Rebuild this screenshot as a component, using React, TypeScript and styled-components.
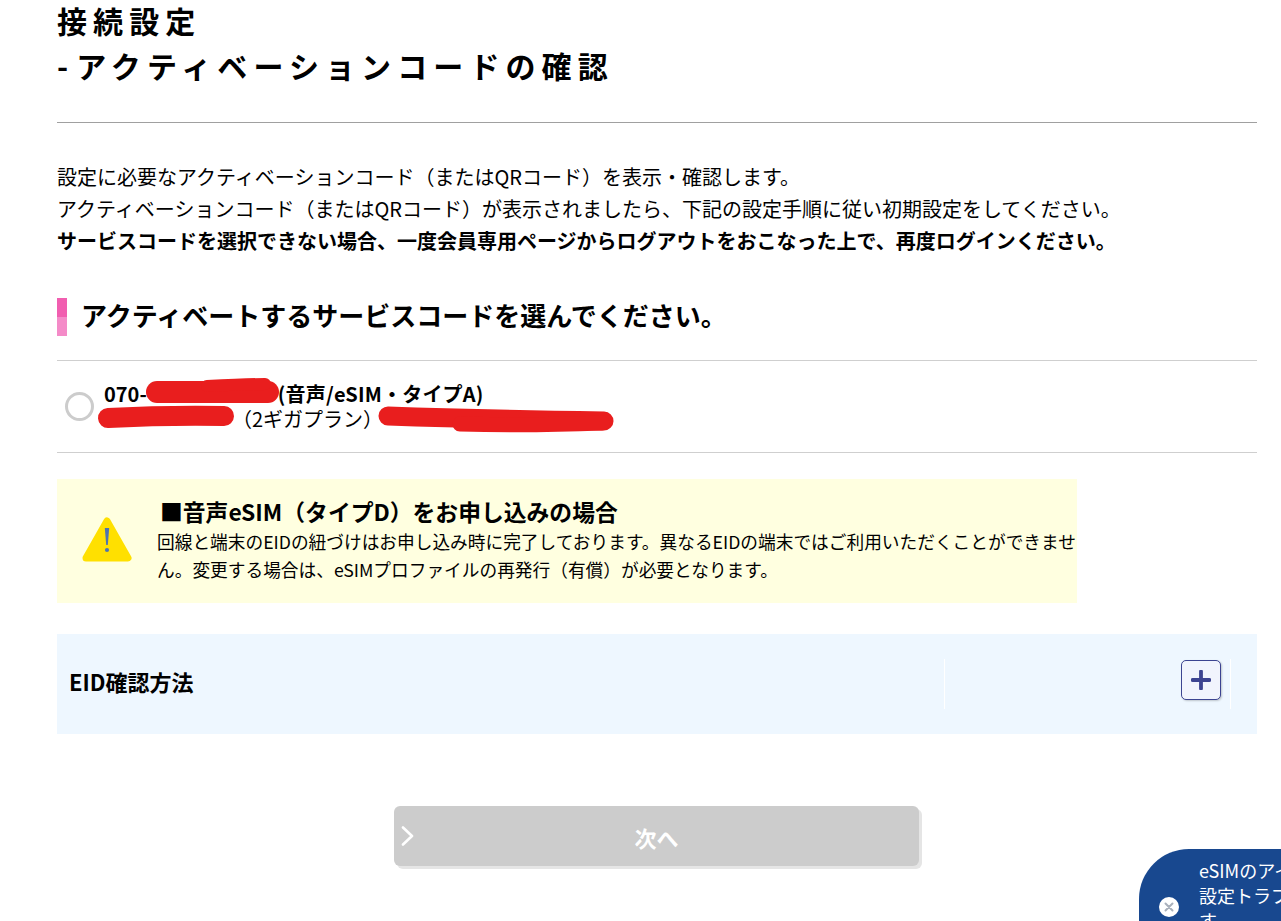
import { createGlobalStyle, styled } from "styled-components";

const GlobalStyle = createGlobalStyle`
  html, body {
    margin: 0;
    padding: 0;
    background: #fff;
    overflow: hidden;
  }
  body {
    width: 1281px;
    height: 921px;
    font-family: "Noto Sans CJK JP", "Noto Sans", sans-serif;
    color: #000;
  }
`;

const Page = styled.div`
  position: relative;
  width: 1281px;
  height: 921px;
  overflow: hidden;
`;

const Content = styled.main`
  width: 1200px;
  margin-left: 57px;
`;

const PageTitle = styled.h1`
  box-sizing: border-box;
  height: 123px;
  margin: 0;
  border-bottom: 1px solid #a0a0a0;
  font-size: 30px;
  font-weight: 700;
  letter-spacing: 6.1px;
`;

const TitleLine = styled.span`
  display: block;
  height: 45px;
  line-height: 41px;
`;

const Hyphen = styled.span`
  margin-right: 2px;
`;

const Intro = styled.div`
  margin-top: 38px;
  font-size: 20px;
  line-height: 32px;
`;

const IntroLine = styled.p<{ $strong?: boolean }>`
  margin: 0;
  font-weight: ${(p) => (p.$strong ? 700 : 400)};
`;

const SectionTitle = styled.h2`
  display: flex;
  align-items: center;
  box-sizing: border-box;
  height: 38px;
  margin: 41px 0 0;
  padding: 0 0 5px 24px;
  font-size: 26px;
  line-height: 33px;
  font-weight: 700;
  background: linear-gradient(#f15eb0 50%, #f48bc8 50%) left top / 10px 100% no-repeat;
`;

const ServiceRow = styled.label`
  position: relative;
  display: flex;
  align-items: center;
  height: 91px;
  margin-top: 24px;
  border-top: 1px solid #cfcfcf;
  border-bottom: 1px solid #cfcfcf;
`;

const Radio = styled.span`
  box-sizing: border-box;
  flex: none;
  width: 29px;
  height: 29px;
  margin-left: 8px;
  border: 3px solid #cccccc;
  border-radius: 50%;
  background: #fff;
`;

const ServiceText = styled.div`
  margin: -2px 0 0 10px;
  font-size: 20px;
  line-height: 25px;
`;

const ServiceNumber = styled.div`
  font-weight: 700;
  white-space: nowrap;
`;

const ServiceType = styled.span`
  letter-spacing: 0.2px;
`;

const RedactedGap = styled.span<{ $width: number }>`
  display: inline-block;
  width: ${(p) => p.$width}px;
`;

const ServicePlan = styled.div`
  white-space: nowrap;
`;

const Scribble = styled.svg`
  position: absolute;
  left: 0;
  top: 0;
  pointer-events: none;
  overflow: visible;
`;

const Notice = styled.section`
  display: flex;
  box-sizing: border-box;
  width: 1020px;
  height: 124px;
  margin-top: 26px;
  padding-top: 18px;
  background: #ffffe0;
`;

const NoticeIcon = styled.svg`
  flex: none;
  width: 50px;
  height: 46px;
  margin: 20px 0 0 25px;
`;

const NoticeBody = styled.div`
  width: 920px;
  margin-left: 25px;
`;

const NoticeTitle = styled.h3`
  margin: 0 0 0 3px;
  font-size: 22.8px;
  line-height: 30px;
  font-weight: 700;
`;

const NoticeText = styled.p`
  margin: 0;
  font-size: 17.7px;
  line-height: 28px;
`;

const Accordion = styled.section`
  position: relative;
  display: flex;
  align-items: center;
  justify-content: space-between;
  box-sizing: border-box;
  height: 100px;
  margin-top: 31px;
  padding: 0 36px 0 12px;
  background: #eef7ff;
`;

const AccordionTitle = styled.span`
  margin-bottom: 7px;
  font-size: 22px;
  font-weight: 700;
`;

const Divider = styled.span<{ $left: number }>`
  position: absolute;
  top: 25px;
  left: ${(p) => p.$left}px;
  width: 1px;
  height: 50px;
  background: #fff;
`;

const PlusButton = styled.span`
  display: flex;
  align-items: center;
  justify-content: center;
  box-sizing: border-box;
  width: 40px;
  height: 40px;
  margin-bottom: 9px;
  border: 1px solid #3c4491;
  border-radius: 5px;
  background: #f1f4fd;
  box-shadow: 1px 1px 2px rgba(0, 0, 0, 0.2);
`;

const NextButton = styled.button`
  position: relative;
  display: block;
  width: 525px;
  height: 60px;
  margin: 72px 0 0 337px;
  padding: 0;
  border: 0;
  border-radius: 6px;
  background: #cccccc;
  box-shadow: 3px 3px 0 #e5e5e5;
  color: #fff;
  font-family: inherit;
  font-size: 22px;
  font-weight: 700;
  line-height: 62px;
  text-align: center;
`;

const Chevron = styled.svg`
  position: absolute;
  left: 7px;
  top: 20px;
`;

const Balloon = styled.aside`
  position: absolute;
  left: 1139px;
  top: 849px;
  box-sizing: border-box;
  width: 300px;
  height: 140px;
  padding: 9px 0 0 60px;
  border-radius: 50px;
  background: #18488f;
  color: #fff;
  font-size: 18px;
  line-height: 25px;
  white-space: nowrap;
`;

const BalloonClose = styled.span`
  position: absolute;
  left: 20px;
  top: 48px;
  display: flex;
  align-items: center;
  justify-content: center;
  width: 20px;
  height: 20px;
  border-radius: 50%;
  background: #fff;
`;

const App = () => {
  return (
    <Page>
      <GlobalStyle />
      <Content>
        <PageTitle>
          <TitleLine>接続設定</TitleLine>
          <TitleLine>
            <Hyphen>-</Hyphen>アクティベーションコードの確認
          </TitleLine>
        </PageTitle>

        <Intro>
          <IntroLine>設定に必要なアクティベーションコード（またはQRコード）を表示・確認します。</IntroLine>
          <IntroLine>アクティベーションコード（またはQRコード）が表示されましたら、下記の設定手順に従い初期設定をしてください。</IntroLine>
          <IntroLine $strong>サービスコードを選択できない場合、一度会員専用ページからログアウトをおこなった上で、再度ログインください。</IntroLine>
        </Intro>

        <SectionTitle>アクティベートするサービスコードを選んでください。</SectionTitle>

        <ServiceRow>
          <Radio />
          <ServiceText>
            <ServiceNumber>
              070-
              <RedactedGap $width={131} />
              <ServiceType>(音声/eSIM・タイプA)</ServiceType>
            </ServiceNumber>
            <ServicePlan>
              <RedactedGap $width={128} />
              （2ギガプラン）
            </ServicePlan>
          </ServiceText>
          <Scribble width="1" height="1" aria-hidden="true">
            <g fill="none" stroke="#e91e1e" strokeLinecap="round" strokeLinejoin="round">
              <path d="M100 31 L211 31" strokeWidth="22" />
              <path d="M150 25 Q190 23 208 23" strokeWidth="12" />
              <path d="M51 57 Q110 54 167 55" strokeWidth="20" />
              <path d="M331 55 Q420 58 547 60" strokeWidth="19" />
              <path d="M403 63 Q470 65 545 62" strokeWidth="15" />
            </g>
          </Scribble>
        </ServiceRow>

        <Notice>
          <NoticeIcon viewBox="0 0 50 46" aria-hidden="true">
            <path d="M25 4 L46 41 H4 Z" fill="#ffe000" stroke="#ffe000" strokeWidth="7" strokeLinejoin="round" />
            <path d="M22.8 11 H27.2 L25.8 28 H24.2 Z" fill="#4f74b0" />
            <circle cx="25" cy="33" r="2.1" fill="#4f74b0" />
          </NoticeIcon>
          <NoticeBody>
            <NoticeTitle>■音声eSIM（タイプD）をお申し込みの場合</NoticeTitle>
            <NoticeText>
              回線と端末のEIDの紐づけはお申し込み時に完了しております。異なるEIDの端末ではご利用いただくことができません。変更する場合は、eSIMプロファイルの再発行（有償）が必要となります。
            </NoticeText>
          </NoticeBody>
        </Notice>

        <Accordion>
          <AccordionTitle>EID確認方法</AccordionTitle>
          <Divider $left={887} />
          <Divider $left={1173} />
          <PlusButton>
            <svg width="20" height="20" viewBox="0 0 20 20" aria-hidden="true">
              <path d="M10 1.5 V18.5 M1.5 10 H18.5" stroke="#3c4491" strokeWidth="3.8" strokeLinecap="round" />
            </svg>
          </PlusButton>
        </Accordion>

        <NextButton disabled>
          <Chevron width="14" height="20" viewBox="0 0 14 20" aria-hidden="true">
            <path d="M2 1.5 L11 10 L2 18.5" fill="none" stroke="#fff" strokeWidth="2.6" strokeLinecap="round" strokeLinejoin="round" />
          </Chevron>
          次へ
        </NextButton>
      </Content>

      <Balloon>
        eSIMのアイ
        <br />
        設定トラブ
        <br />
        す
        <BalloonClose>
          <svg width="10" height="10" viewBox="0 0 10 10" aria-hidden="true">
            <path d="M1.5 1.5 L8.5 8.5 M8.5 1.5 L1.5 8.5" stroke="#a9b0bb" strokeWidth="2" strokeLinecap="round" />
          </svg>
        </BalloonClose>
      </Balloon>
    </Page>
  );
};

export default App;
